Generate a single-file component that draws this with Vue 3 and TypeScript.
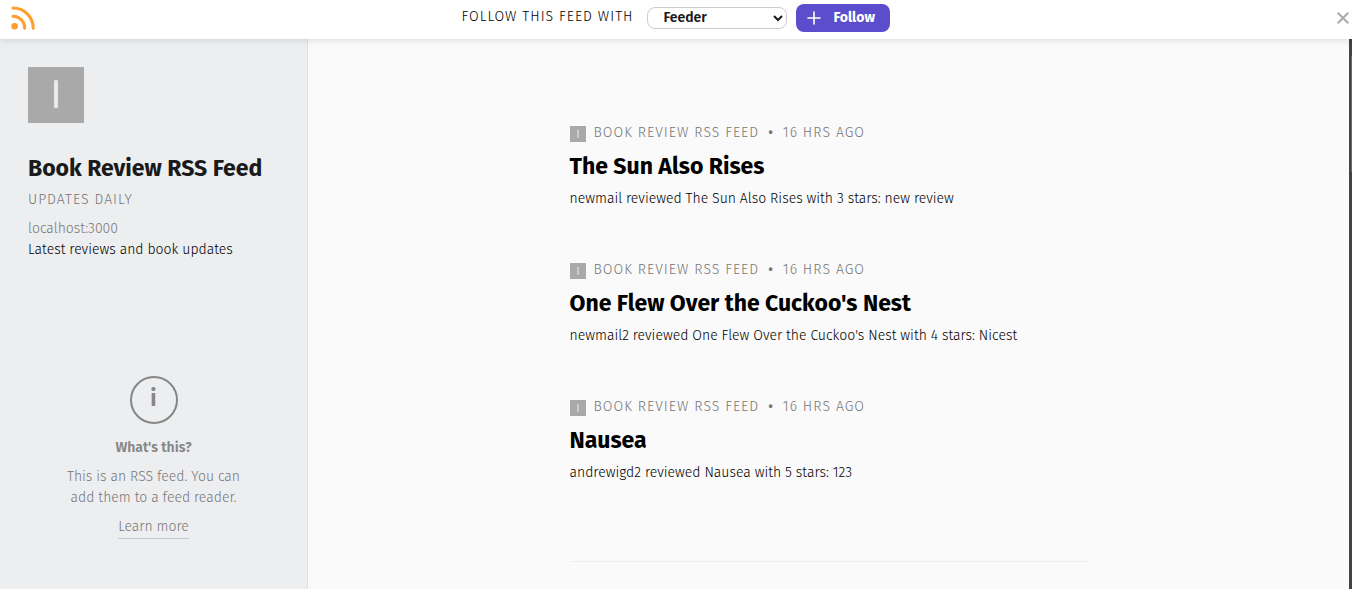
<script setup lang="ts">
import { ref } from 'vue'

interface FeedItem {
  title: string
  summary: string
  age: string
}

const feedTitle = 'Book Review RSS Feed'
const reader = ref('Feeder')
const items: FeedItem[] = [
  { title: 'The Sun Also Rises', summary: 'newmail reviewed The Sun Also Rises with 3 stars: new review', age: '16 hrs ago' },
  { title: "One Flew Over the Cuckoo's Nest", summary: "newmail2 reviewed One Flew Over the Cuckoo's Nest with 4 stars: Nicest", age: '16 hrs ago' },
  { title: 'Nausea', summary: 'andrewigd2 reviewed Nausea with 5 stars: 123', age: '16 hrs ago' },
]
</script>

<template>
  <div class="page">
    <header class="bar">
      <svg class="rss" viewBox="0 0 24 24" width="24" height="24" fill="none" stroke="#ff9e2c" stroke-width="3" stroke-linecap="round" aria-hidden="true">
        <circle cx="3.6" cy="20.3" r="3.3" fill="#ff9e2c" stroke="none" />
        <path d="M2 10.3A11.7 11.7 0 0 1 13.7 22.2" />
        <path d="M2 2A20.2 20.2 0 0 1 22.2 22.2" />
      </svg>
      <form class="follow" @submit.prevent>
        <label class="follow-label" for="reader">Follow this feed with</label>
        <select id="reader" v-model="reader" class="reader">
          <option>Feeder</option>
          <option>Feedly</option>
          <option>Inoreader</option>
        </select>
        <button class="follow-button" type="submit">
          <svg viewBox="0 0 14 14" width="14" height="14" stroke="#fff" stroke-width="1.6" stroke-linecap="round" aria-hidden="true">
            <path d="M7 1V13M1 7H13" />
          </svg>
          Follow
        </button>
      </form>
      <button class="close" type="button" aria-label="Close">
        <svg viewBox="0 0 12 12" width="12" height="12" stroke="#aaa" stroke-width="2" aria-hidden="true">
          <path d="M.7 .7L11.3 11.3M11.3 .7L.7 11.3" />
        </svg>
      </button>
    </header>

    <div class="body">
      <aside class="side">
        <svg class="avatar" viewBox="0 0 56 56" width="56" height="56" aria-hidden="true">
          <rect width="56" height="56" fill="#a9a9a9" />
          <rect x="26" y="13" width="4" height="28" rx="1" fill="#eee" stroke="#c4c4c4" stroke-width=".6" />
        </svg>
        <h1 class="feed-title">{{ feedTitle }}</h1>
        <p class="frequency">Updates daily</p>
        <a class="host" href="#">localhost:3000</a>
        <p class="about">Latest reviews and book updates</p>
        <section class="help">
          <span class="info" aria-hidden="true">i</span>
          <h2 class="help-title">What's this?</h2>
          <p class="help-text">This is an RSS feed. You can add them to a feed reader.</p>
          <a class="learn" href="#">Learn more</a>
        </section>
      </aside>

      <main class="main">
        <div class="list">
          <article v-for="item in items" :key="item.title" class="item">
            <p class="meta">
              <svg class="thumb" viewBox="0 0 16 16" width="16" height="16" aria-hidden="true">
                <rect width="16" height="16" fill="#a9a9a9" />
                <rect x="7" y="4" width="2" height="8" fill="#ccc" />
              </svg>
              <span>{{ feedTitle }}</span>
              <span class="dot">•</span>
              <span>{{ item.age }}</span>
            </p>
            <h2 class="title">{{ item.title }}</h2>
            <p class="summary">{{ item.summary }}</p>
          </article>
        </div>
      </main>
      <div class="track"><div class="handle"></div></div>
    </div>
  </div>
</template>

<style>
body {
  margin: 0;
  background: #fafafa;
}
</style>

<style scoped>
.page {
  display: flex;
  flex-direction: column;
  min-height: 100vh;
  font-family: "Fira Sans", "Noto Sans", sans-serif;
  font-size: 14px;
  font-weight: 300;
  line-height: 21px;
  color: #000;
}
h1, h2, p {
  margin: 0;
}
.bar {
  display: grid;
  grid-template-columns: 1fr auto 1fr;
  align-items: center;
  height: 39px;
  background: #fff;
  box-shadow: 0 0 8px rgba(0, 0, 0, 0.16);
  z-index: 1;
}
.rss {
  margin: 0 0 3px 11px;
}
.follow {
  display: flex;
  align-items: center;
  margin-bottom: 4px;
}
.follow-label {
  margin: 0 14px 2px 0;
  letter-spacing: 1px;
  text-transform: uppercase;
}
.reader {
  width: 140px;
  height: 22px;
  margin-right: 9px;
  padding: 0 0 0 11px;
  border: 1px solid #ccc;
  border-radius: 8px;
  background: #fff;
  color: #1a1a1a;
  font-family: inherit;
  font-size: 14px;
  font-weight: 600;
}
.follow-button {
  display: flex;
  align-items: center;
  gap: 12px;
  width: 94px;
  height: 28px;
  padding: 0 0 0 11px;
  border: 0;
  border-radius: 8px;
  background: #5b4dcc;
  color: #fff;
  font-family: inherit;
  font-size: 14px;
  font-weight: 700;
}
.close {
  justify-self: end;
  display: flex;
  margin: 0 3px 3px 0;
  padding: 0;
  border: 0;
  background: none;
}
.body {
  display: flex;
  flex: 1;
}
.side {
  box-sizing: border-box;
  flex: 0 0 308px;
  padding: 28px;
  border-right: 1px solid #e0e1e3;
  background: #edeef0;
}
.avatar {
  display: block;
}
.feed-title {
  margin-top: 29px;
  color: #1a1a1a;
  font-size: 23px;
  font-weight: 700;
  line-height: 32px;
  white-space: nowrap;
}
.frequency {
  margin-top: 5px;
  letter-spacing: 1px;
  text-transform: uppercase;
  color: #777;
}
.host {
  display: block;
  margin-top: 8px;
  color: #777;
  text-decoration: none;
}
.help {
  display: flex;
  flex-direction: column;
  align-items: center;
  margin-top: 116px;
  color: #777;
  text-align: center;
}
.info {
  box-sizing: border-box;
  width: 48px;
  height: 48px;
  border: 2px solid #868686;
  border-radius: 50%;
  color: #868686;
  font-size: 24px;
  font-weight: 600;
  line-height: 40px;
}
.help-title {
  margin-top: 13px;
  color: #868686;
  font-size: 14px;
  font-weight: 600;
  line-height: 21px;
}
.help-text {
  width: 196px;
  margin-top: 8px;
}
.learn {
  margin-top: 8px;
  padding-bottom: 1px;
  border-bottom: 1px solid #c8c8c8;
  color: inherit;
  text-decoration: none;
}
.main {
  flex: 1;
  min-width: 0;
  padding: 83px 24px 26px;
}
.list {
  display: flex;
  flex-direction: column;
  gap: 50px;
  max-width: 518px;
  margin: 0 auto;
  padding-bottom: 78px;
  border-bottom: 1px solid #eee;
}
.meta {
  display: flex;
  align-items: center;
  letter-spacing: 1px;
  text-transform: uppercase;
  color: #777;
}
.thumb {
  margin: 2px 8px 0 0;
}
.dot {
  margin: 0 9px;
  font-weight: 500;
}
.title {
  margin: 8px 0 6px;
  font-size: 23px;
  font-weight: 700;
  line-height: 31px;
}
.track {
  display: flex;
  justify-content: flex-end;
  flex: 0 0 3px;
  background: #424443;
}
.handle {
  width: 1px;
  height: 116px;
  margin-top: 17px;
  background: #686868;
}
</style>
